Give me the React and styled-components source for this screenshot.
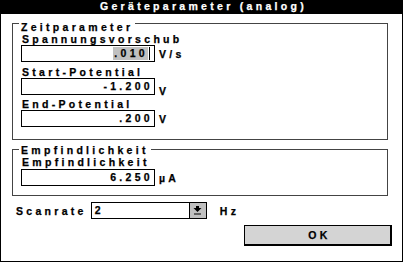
import React from "react";
import styled, { createGlobalStyle } from "styled-components";

const Global = createGlobalStyle`
  html, body { margin: 0; padding: 0; background: #fff; }
  body { font-family: "Liberation Sans", Arial, sans-serif; }
`;

const Window = styled.div`
  box-sizing: border-box;
  width: 403px;
  height: 262px;
  border: 1px solid #000;
  border-top: 0;
  background: #fff;
  display: flex;
  flex-direction: column;
  font: bold 10.5px "Liberation Sans", Arial, sans-serif;
  letter-spacing: 3.3px;
  -webkit-text-stroke: 0.25px currentColor;
  color: #000;
  overflow: hidden;
`;

const TitleBar = styled.div`
  background: #000;
  color: #fff;
  text-align: center;
  line-height: 11px;
  padding: 1px 0 2px 4px;
  white-space: nowrap;
`;

const Content = styled.div`
  display: flex;
  flex-direction: column;
  padding: 9px 14px 0 11px;
`;

const Group = styled.section`
  border: 1px solid #444;
  padding: 0 8px ${(p) => p.$pb}px 8px;
  display: flex;
  flex-direction: column;
  align-items: flex-start;
  & + & {
    margin-top: 9px;
  }
`;

const Caption = styled.div`
  background: #fff;
  line-height: 11px;
  padding: 0 2px;
  margin: -${(p) => p.$lift}px 0 0 -2px;
  white-space: nowrap;
`;

const Label = styled.div`
  line-height: 12px;
  padding-left: 1px;
  margin-top: ${(p) => p.$mt || 0}px;
  white-space: nowrap;
`;

const FieldRow = styled.div`
  display: flex;
  align-items: flex-start;
  gap: 4px;
  margin-top: ${(p) => p.$mt || 0}px;
`;

const Edit = styled.div`
  box-sizing: border-box;
  width: 134px;
  height: 17px;
  border: 1px solid #000;
  background: #fff;
  display: flex;
  justify-content: flex-end;
  align-items: center;
  line-height: 15px;
  padding-right: ${(p) => (p.$focused ? 4 : 1)}px;
`;

const Selected = styled.span`
  background: #c0c0c0;
  line-height: 13px;
  padding-left: 1px;
`;

const Caret = styled.span`
  display: block;
  width: 1px;
  height: 13px;
  background: #000;
  margin-left: 1px;
`;

const Unit = styled.div`
  line-height: 12px;
  padding-top: ${(p) => p.$drop}px;
  white-space: nowrap;
`;

const ScanRow = styled.div`
  display: flex;
  align-items: center;
  margin-top: 6px;
  padding-left: 4px;
`;

const ScanLabel = styled.div`
  line-height: 12px;
`;

const Combo = styled.div`
  box-sizing: border-box;
  width: 116px;
  height: 17px;
  margin-left: 4px;
  border: 1px solid #000;
  display: flex;
  background: #fff;
`;

const ComboText = styled.div`
  flex: 1;
  line-height: 15px;
  padding-left: 3px;
`;

const ComboButton = styled.div`
  width: 16px;
  border-left: 1px solid #000;
  background: #c0c0c0;
  display: flex;
  align-items: center;
  justify-content: center;
`;

const HzLabel = styled.div`
  line-height: 12px;
  margin-left: 13px;
`;

const ButtonRow = styled.div`
  display: flex;
  justify-content: flex-end;
  margin: 6px -4px 0 0;
`;

const Button = styled.div`
  box-sizing: border-box;
  width: 148px;
  height: 21px;
  border: 1px solid #000;
  border-right-width: 2px;
  border-bottom-width: 2px;
  background: #d4d4d4;
  display: flex;
  align-items: center;
  justify-content: center;
  line-height: 12px;
  padding-left: 4px;
`;

const ArrowIcon = () => (
  <svg width="9" height="9" viewBox="0 0 9 9">
    <rect x="3" y="0" width="3" height="2" fill="#000" />
    <polygon points="0.5,2 8.5,2 4.5,6" fill="#000" />
    <rect x="1" y="7.5" width="7" height="1" fill="#000" />
  </svg>
);

export default function App() {
  return (
    <>
      <Global />
      <Window>
        <TitleBar>Geräteparameter (analog)</TitleBar>
        <Content>
          <Group $pb={12}>
            <Caption $lift={2}>Zeitparameter</Caption>
            <Label>Spannungsvorschub</Label>
            <FieldRow>
              <Edit $focused>
                <Selected>.010</Selected>
                <Caret />
              </Edit>
              <Unit $drop={3}>V/s</Unit>
            </FieldRow>
            <Label $mt={4}>Start-Potential</Label>
            <FieldRow>
              <Edit>-1.200</Edit>
              <Unit $drop={7}>V</Unit>
            </FieldRow>
            <Label $mt={1}>End-Potential</Label>
            <FieldRow>
              <Edit>.200</Edit>
              <Unit $drop={3}>V</Unit>
            </FieldRow>
          </Group>
          <Group $pb={9}>
            <Caption $lift={5}>Empfindlichkeit</Caption>
            <Label>Empfindlichkeit</Label>
            <FieldRow $mt={1}>
              <Edit>6.250</Edit>
              <Unit $drop={3}>µA</Unit>
            </FieldRow>
          </Group>
          <ScanRow>
            <ScanLabel>Scanrate</ScanLabel>
            <Combo>
              <ComboText>2</ComboText>
              <ComboButton>
                <ArrowIcon />
              </ComboButton>
            </Combo>
            <HzLabel>Hz</HzLabel>
          </ScanRow>
          <ButtonRow>
            <Button>OK</Button>
          </ButtonRow>
        </Content>
      </Window>
    </>
  );
}
